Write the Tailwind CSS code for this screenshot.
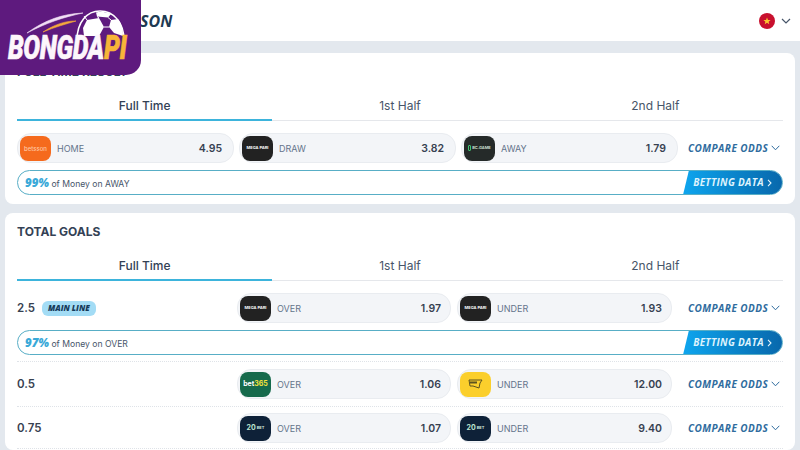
<!DOCTYPE html>
<html lang="en">
<head>
  <meta charset="UTF-8" />
  <title>Odds</title>
  <script src="https://cdn.jsdelivr.net/npm/@tailwindcss/browser@4"></script>
</head>
<body class="relative w-[800px] h-[450px] overflow-hidden bg-[#e3e8ee] font-['Inter','Liberation_Sans',sans-serif]">

  <!-- Logo overlay -->
  <div class="absolute left-0 top-0 z-10 w-[141px] h-[75px] bg-[#5e1a7e] rounded-br-[15px] overflow-hidden">
    <svg class="absolute left-0 top-0" width="141" height="75" viewBox="0 0 141 75" fill="none">
      <path d="M27 33 C45 20 62 14 83 13 C64 17 46 23 27 33Z" fill="#f1dff5" stroke="#f1dff5" stroke-width=".6"/>
      <path d="M43 32 C54 25 64 21 76 21 C66 24 55 27 43 32Z" fill="#f5a93c" stroke="#f5a93c" stroke-width=".6"/>
      <path d="M77 40 C77 22 87 11 100 11 C114 11 124 23 124 40" stroke="#fff" stroke-width="1.5"/>
      <path d="M87 20 L99 18 L104 27 L99 36 L84 36 L83 28 Z" fill="#fff"/>
      <path d="M96 12.5 C101 11.5 106 12 111 14 L108 17.5 L97 16.5 Z" fill="#fff"/>
      <path d="M111 20 L118 19 C121 23 123 28 123 36 L114 33 L109 27 Z" fill="#fff"/>
      <path d="M104 27 L109 27 M99 18 L97 16.5 M108 17.5 L111 20 M87 20 L84 16" stroke="#fff" stroke-width="1"/>
    </svg>
    <div class="absolute left-[8px] top-[35px] origin-left scale-x-[.76] whitespace-nowrap font-['Roboto',sans-serif] italic font-black text-[33px] leading-[26px] text-[#fdf6fb] tracking-[-0.5px] [-webkit-text-stroke-width:0.6px]">BONGDA<span class="text-[#f7b538]">PI</span></div>
  </div>

  <!-- Header -->
  <header class="h-[41px] bg-white flex items-center justify-between pl-[140px] pr-[9px]">
    <span class="font-['Open_Sans',sans-serif] italic font-bold text-[16px] text-[#1e3a52]">SON</span>
    <div class="flex items-center gap-[6px]">
      <svg width="16" height="16" viewBox="0 0 16 16"><circle cx="8" cy="8" r="8" fill="#c8102e"/><path d="M8 4.5l1 2.5 2.6.1-2 1.6.7 2.6L8 9.8l-2.3 1.5.7-2.6-2-1.6L7 7z" fill="#fbc531"/></svg>
      <svg width="10" height="6" viewBox="0 0 10 6" fill="none"><path d="M1 1l4 4 4-4" stroke="#475569" stroke-width="1.2"/></svg>
    </div>
  </header>

  <main class="flex flex-col gap-[9px] px-[5px] pt-[12px]">

    <!-- Full time result -->
    <section class="bg-white rounded-[8px] px-[12px] pb-[9px]">
      <h2 class="h-[36px] pt-[2px] flex items-center text-[12px] font-bold text-[#334155]">FULL TIME RESULT</h2>
      <div class="grid grid-cols-3 h-[32px] border-b border-[#e5e7eb] text-[12px] text-[#475569]">
        <div class="flex items-center justify-center pt-[3px] font-medium text-[#334155] border-b-2 border-[#3db4dc] h-[32px]">Full Time</div>
        <div class="flex items-center justify-center pt-[1px]">1st Half</div>
        <div class="flex items-center justify-center pt-[1px]">2nd Half</div>
      </div>

      <div class="flex items-center mt-[12px]">
        <div class="flex-1 flex gap-[5px]">
          <div class="flex-1 h-[30px] flex items-center bg-[#f3f5f8] border border-[#e9ecf0] rounded-[14px] pl-[2px] pr-[11px]">
            <div class="w-[31px] h-[25px] rounded-[8px] bg-[#f56a1d] flex items-center justify-center text-[6px] text-[#ffc7a3] font-medium">betsson</div>
            <span class="ml-[6px] pt-[1px] text-[9px] text-[#64748b]">HOME</span>
            <span class="ml-auto pt-[1px] text-[10.5px] font-semibold text-[#374151]">4.95</span>
          </div>
          <div class="flex-1 h-[30px] flex items-center bg-[#f3f5f8] border border-[#e9ecf0] rounded-[14px] pl-[2px] pr-[11px]">
            <div class="w-[31px] h-[25px] rounded-[8px] bg-[#222222] flex items-center justify-center text-[4px] text-white font-bold whitespace-nowrap">MEGA PARI</div>
            <span class="ml-[6px] pt-[1px] text-[9px] text-[#64748b]">DRAW</span>
            <span class="ml-auto pt-[1px] text-[10.5px] font-semibold text-[#374151]">3.82</span>
          </div>
          <div class="flex-1 h-[30px] flex items-center bg-[#f3f5f8] border border-[#e9ecf0] rounded-[14px] pl-[2px] pr-[11px]">
            <div class="w-[31px] h-[25px] rounded-[8px] bg-[#252a29] flex items-center justify-center gap-[1px] text-[4px] text-[#d5e8dc] font-semibold whitespace-nowrap"><span class="w-[3px] h-[6px] border border-[#3fc46f] rounded-[1px]"></span>BC.GAME</div>
            <span class="ml-[6px] pt-[1px] text-[9px] text-[#64748b]">AWAY</span>
            <span class="ml-auto pt-[1px] text-[10.5px] font-semibold text-[#374151]">1.79</span>
          </div>
        </div>
        <div class="w-[95px] ml-[10px] flex items-center gap-[3px] whitespace-nowrap font-['Open_Sans',sans-serif] italic font-bold text-[10px] tracking-[0.45px] text-[#2f6c9e]">COMPARE ODDS
          <svg width="9" height="6" viewBox="0 0 9 6" fill="none"><path d="M.7.8l3.8 4 3.8-4" stroke="#2f6c9e" stroke-width="1"/></svg>
        </div>
      </div>

      <div class="mt-[7px] h-[25px] flex items-center justify-between border border-[#58aec6] rounded-full overflow-hidden pl-[7px]">
        <div class="pt-[1px] text-[8.6px] text-[#475569]"><span class="font-['Open_Sans',sans-serif] italic font-extrabold text-[11.5px] text-[#3aa9d8]">99%</span> of Money on AWAY</div>
        <div class="w-[99px] h-[25px] flex items-center justify-center gap-[3px] bg-gradient-to-r from-[#0ea5ee] to-[#0868ac] [clip-path:polygon(6px_0,100%_0,100%_100%,0_100%)] font-['Open_Sans',sans-serif] italic font-bold text-[10px] tracking-[0.3px] text-[#dff3fd] whitespace-nowrap">BETTING DATA
          <svg width="5" height="8" viewBox="0 0 5 8" fill="none"><path d="M1 .8l3 3.2-3 3.2" stroke="#dff3fd" stroke-width="1.1"/></svg>
        </div>
      </div>
    </section>

    <!-- Total goals -->
    <section class="bg-white rounded-[8px] px-[12px] h-[237px]">
      <h2 class="h-[36px] pt-[2px] flex items-center text-[12px] font-bold text-[#334155]">TOTAL GOALS</h2>
      <div class="grid grid-cols-3 h-[32px] border-b border-[#e5e7eb] text-[12px] text-[#475569]">
        <div class="flex items-center justify-center pt-[3px] font-medium text-[#334155] border-b-2 border-[#3db4dc] h-[32px]">Full Time</div>
        <div class="flex items-center justify-center pt-[1px]">1st Half</div>
        <div class="flex items-center justify-center pt-[1px]">2nd Half</div>
      </div>

      <!-- 2.5 -->
      <div class="flex items-center mt-[12px]">
        <div class="w-[220px] flex items-center gap-[7px]">
          <span class="pt-[1px] text-[11.5px] font-semibold text-[#374151]">2.5</span>
          <span class="h-[15px] px-[6px] flex items-center rounded-[6px] bg-[#a3dcf5] font-['Open_Sans',sans-serif] italic font-extrabold text-[8px] text-[#163a5a]">MAIN LINE</span>
        </div>
        <div class="w-[214px] h-[30px] flex items-center bg-[#f3f5f8] border border-[#e9ecf0] rounded-[14px] pl-[2px] pr-[9px]">
          <div class="w-[31px] h-[25px] rounded-[8px] bg-[#222222] flex items-center justify-center text-[4px] text-white font-bold whitespace-nowrap">MEGA PARI</div>
          <span class="ml-[6px] pt-[1px] text-[9px] text-[#64748b]">OVER</span>
          <span class="ml-auto pt-[1px] text-[10.5px] font-semibold text-[#374151]">1.97</span>
        </div>
        <div class="w-[215px] ml-[6px] h-[30px] flex items-center bg-[#f3f5f8] border border-[#e9ecf0] rounded-[14px] pl-[2px] pr-[9px]">
          <div class="w-[31px] h-[25px] rounded-[8px] bg-[#222222] flex items-center justify-center text-[4px] text-white font-bold whitespace-nowrap">MEGA PARI</div>
          <span class="ml-[6px] pt-[1px] text-[9px] text-[#64748b]">UNDER</span>
          <span class="ml-auto pt-[1px] text-[10.5px] font-semibold text-[#374151]">1.93</span>
        </div>
        <div class="w-[95px] ml-[16px] flex items-center gap-[3px] whitespace-nowrap font-['Open_Sans',sans-serif] italic font-bold text-[10px] tracking-[0.45px] text-[#2f6c9e]">COMPARE ODDS
          <svg width="9" height="6" viewBox="0 0 9 6" fill="none"><path d="M.7.8l3.8 4 3.8-4" stroke="#2f6c9e" stroke-width="1"/></svg>
        </div>
      </div>

      <div class="mt-[7px] h-[25px] flex items-center justify-between border border-[#58aec6] rounded-full overflow-hidden pl-[7px]">
        <div class="pt-[1px] text-[8.6px] text-[#475569]"><span class="font-['Open_Sans',sans-serif] italic font-extrabold text-[11.5px] text-[#3aa9d8]">97%</span> of Money on OVER</div>
        <div class="w-[99px] h-[25px] flex items-center justify-center gap-[3px] bg-gradient-to-r from-[#0ea5ee] to-[#0868ac] [clip-path:polygon(6px_0,100%_0,100%_100%,0_100%)] font-['Open_Sans',sans-serif] italic font-bold text-[10px] tracking-[0.3px] text-[#dff3fd] whitespace-nowrap">BETTING DATA
          <svg width="5" height="8" viewBox="0 0 5 8" fill="none"><path d="M1 .8l3 3.2-3 3.2" stroke="#dff3fd" stroke-width="1.1"/></svg>
        </div>
      </div>
      <div class="mt-[6px] border-t border-dotted border-[#dfe3e8]"></div>

      <!-- 0.5 -->
      <div class="flex items-center mt-[7px]">
        <div class="w-[220px] pt-[1px] text-[11.5px] font-semibold text-[#374151]">0.5</div>
        <div class="w-[214px] h-[30px] flex items-center bg-[#f3f5f8] border border-[#e9ecf0] rounded-[14px] pl-[2px] pr-[9px]">
          <div class="w-[31px] h-[25px] rounded-[8px] bg-[#166a4c] flex items-center justify-center text-[7px] text-white font-bold">bet<span class="text-[#f5e33b]">365</span></div>
          <span class="ml-[6px] pt-[1px] text-[9px] text-[#64748b]">OVER</span>
          <span class="ml-auto pt-[1px] text-[10.5px] font-semibold text-[#374151]">1.06</span>
        </div>
        <div class="w-[215px] ml-[6px] h-[30px] flex items-center bg-[#f3f5f8] border border-[#e9ecf0] rounded-[14px] pl-[2px] pr-[9px]">
          <div class="w-[31px] h-[25px] rounded-[8px] bg-[#fbcf2c] flex items-center justify-center">
            <svg width="15" height="10" viewBox="0 0 15 10"><path d="M1 1h13l-2 3-1 5-6-2H2z" fill="none" stroke="#5c5320" stroke-width="1"/><path d="M2 2.5h7v2H2z" fill="#5c5320"/></svg>
          </div>
          <span class="ml-[6px] pt-[1px] text-[9px] text-[#64748b]">UNDER</span>
          <span class="ml-auto pt-[1px] text-[10.5px] font-semibold text-[#374151]">12.00</span>
        </div>
        <div class="w-[95px] ml-[16px] flex items-center gap-[3px] whitespace-nowrap font-['Open_Sans',sans-serif] italic font-bold text-[10px] tracking-[0.45px] text-[#2f6c9e]">COMPARE ODDS
          <svg width="9" height="6" viewBox="0 0 9 6" fill="none"><path d="M.7.8l3.8 4 3.8-4" stroke="#2f6c9e" stroke-width="1"/></svg>
        </div>
      </div>
      <div class="mt-[7px] border-t border-dotted border-[#dfe3e8]"></div>

      <!-- 0.75 -->
      <div class="flex items-center mt-[6px]">
        <div class="w-[220px] pt-[1px] text-[11.5px] font-semibold text-[#374151]">0.75</div>
        <div class="w-[214px] h-[30px] flex items-center bg-[#f3f5f8] border border-[#e9ecf0] rounded-[14px] pl-[2px] pr-[9px]">
          <div class="w-[31px] h-[25px] rounded-[8px] bg-[#0e2138] flex items-center justify-center gap-[1px] text-[4px] text-[#cfe8dc] font-bold"><span class="text-[7px] text-[#bfe6d2]">20</span>BET</div>
          <span class="ml-[6px] pt-[1px] text-[9px] text-[#64748b]">OVER</span>
          <span class="ml-auto pt-[1px] text-[10.5px] font-semibold text-[#374151]">1.07</span>
        </div>
        <div class="w-[215px] ml-[6px] h-[30px] flex items-center bg-[#f3f5f8] border border-[#e9ecf0] rounded-[14px] pl-[2px] pr-[9px]">
          <div class="w-[31px] h-[25px] rounded-[8px] bg-[#0e2138] flex items-center justify-center gap-[1px] text-[4px] text-[#cfe8dc] font-bold"><span class="text-[7px] text-[#bfe6d2]">20</span>BET</div>
          <span class="ml-[6px] pt-[1px] text-[9px] text-[#64748b]">UNDER</span>
          <span class="ml-auto pt-[1px] text-[10.5px] font-semibold text-[#374151]">9.40</span>
        </div>
        <div class="w-[95px] ml-[16px] flex items-center gap-[3px] whitespace-nowrap font-['Open_Sans',sans-serif] italic font-bold text-[10px] tracking-[0.45px] text-[#2f6c9e]">COMPARE ODDS
          <svg width="9" height="6" viewBox="0 0 9 6" fill="none"><path d="M.7.8l3.8 4 3.8-4" stroke="#2f6c9e" stroke-width="1"/></svg>
        </div>
      </div>
      <div class="mt-[5px] border-t border-dotted border-[#dfe3e8]"></div>
    </section>
  </main>
</body>
</html>
